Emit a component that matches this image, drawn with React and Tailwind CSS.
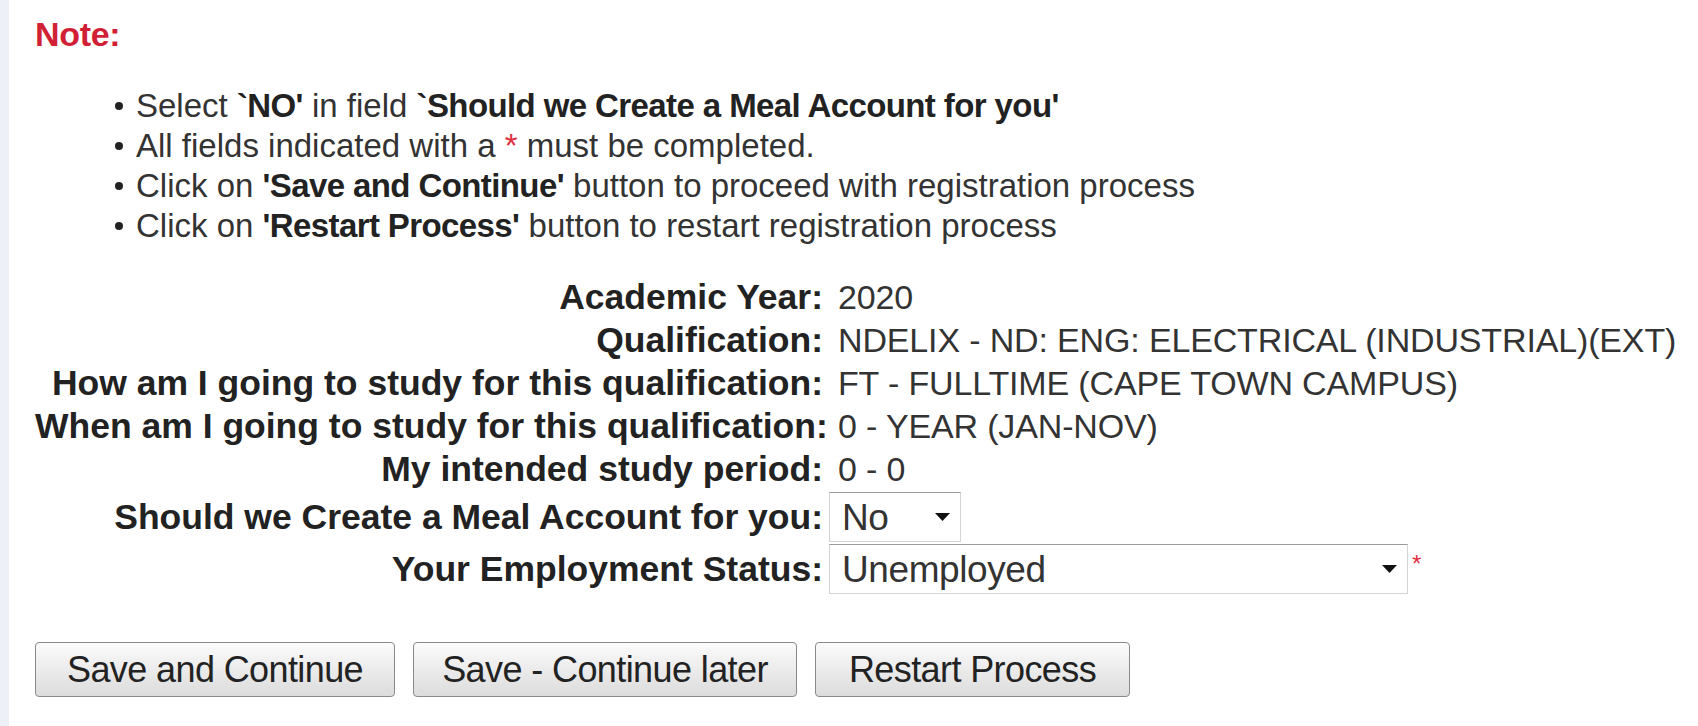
import React from "react";

const font = { fontFamily: '"Liberation Sans", Arial, sans-serif' };

const rows = [
  { label: "Academic Year:", value: "2020" },
  { label: "Qualification:", value: "NDELIX - ND: ENG: ELECTRICAL (INDUSTRIAL)(EXT)" },
  { label: "How am I going to study for this qualification:", value: "FT - FULLTIME (CAPE TOWN CAMPUS)" },
  { label: "When am I going to study for this qualification:", value: "0 - YEAR (JAN-NOV)" },
  { label: "My intended study period:", value: "0 - 0" },
];

function Arrow() {
  return (
    <svg width="15" height="8" viewBox="0 0 15 8">
      <path d="M0 0 L15 0 L7.5 8 Z" fill="#111" />
    </svg>
  );
}

function FakeSelect({ value, width }) {
  return (
    <div
      className={"flex items-center justify-between h-[50px] border border-[#d4d4d4] border-t-[#9a9a9a] bg-white pl-[12px] pr-[10px] text-[37px] tracking-[-0.4px] text-[#333] " + width}
    >
      <span>{value}</span>
      <Arrow />
    </div>
  );
}

function Button({ children, width }) {
  return (
    <button
      className={"h-[55px] rounded-[4px] border border-[#8a8a8a] bg-gradient-to-b from-[#fbfbfb] to-[#dcdcdc] text-[36px] text-[#222] tracking-[-0.6px] " + width}
      style={font}
    >
      {children}
    </button>
  );
}

function Bullet({ children }) {
  return (
    <li className="flex items-center">
      <span className="w-[8px] h-[8px] rounded-full bg-[#222] mr-[13px]"></span>
      <span>{children}</span>
    </li>
  );
}

export default function App() {
  return (
    <div className="w-[1698px] h-[726px] bg-white flex text-[#333]" style={font}>
      <div className="w-[9px] bg-[#eef0f7]"></div>
      <div className="flex-1 pl-[26px]">
        <div className="pt-[17px] text-[34px] font-bold text-[#d11f35] leading-[34px] tracking-[-0.3px]">Note:</div>
        <ul className="mt-[35px] ml-[80px] text-[33px] leading-[40px] text-[#333]">
          <Bullet>
            Select <b className="text-[#222] tracking-[-0.6px]">`NO'</b> in field <b className="text-[#222] tracking-[-0.6px]">`Should we Create a Meal Account for you'</b>
          </Bullet>
          <Bullet>
            All fields indicated with a <span className="text-[#e03040]">*</span> must be completed.
          </Bullet>
          <Bullet>
            Click on <b className="text-[#222] tracking-[-0.6px]">'Save and Continue'</b> button to proceed with registration process
          </Bullet>
          <Bullet>
            Click on <b className="text-[#222] tracking-[-0.6px]">'Restart Process'</b> button to restart registration process
          </Bullet>
        </ul>

        <div className="mt-[30px] grid grid-cols-[788px_1fr] gap-x-[15px] text-[35.5px] leading-[43px] text-[#222]">
          {rows.map((r) => (
            <React.Fragment key={r.label}>
              <div className="text-right font-bold whitespace-nowrap">{r.label}</div>
              <div className="text-[#333] text-[34px] tracking-[-0.15px] whitespace-nowrap">{r.value}</div>
            </React.Fragment>
          ))}
          <div className="text-right font-bold self-center whitespace-nowrap">Should we Create a Meal Account for you:</div>
          <div className="pt-[1px] pb-[2px] ml-[-9px]">
            <FakeSelect value="No" width="w-[132px]" />
          </div>
          <div className="text-right font-bold self-center whitespace-nowrap">Your Employment Status:</div>
          <div className="flex items-start ml-[-9px]">
            <FakeSelect value="Unemployed" width="w-[579px]" />
            <span className="text-[#e03040] text-[24px] leading-[20px] ml-[4px] mt-[10px]">*</span>
          </div>
        </div>

        <div className="mt-[48px] flex gap-[18px]">
          <Button width="w-[360px]">Save and Continue</Button>
          <Button width="w-[384px]">Save - Continue later</Button>
          <Button width="w-[315px]">Restart Process</Button>
        </div>
      </div>
    </div>
  );
}
